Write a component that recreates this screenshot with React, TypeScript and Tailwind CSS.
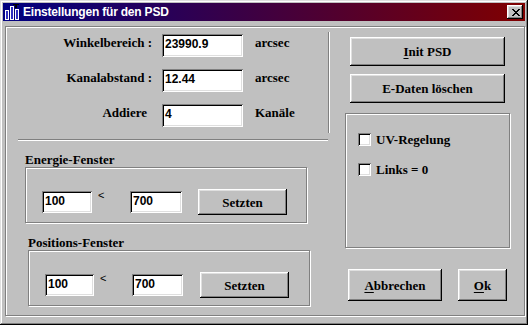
const raised =
  "bg-[#c0c0c0] shadow-[inset_-1px_-1px_#000,inset_1px_1px_#fff,inset_-2px_-2px_#808080,inset_2px_2px_#dfdfdf]";
const sunken =
  "bg-white shadow-[inset_1px_1px_#808080,inset_-1px_-1px_#fff,inset_2px_2px_#000,inset_-2px_-2px_#dfdfdf]";
const etched = "border border-[#808080] shadow-[1px_1px_0_#fff,inset_1px_1px_0_#fff]";

function Btn({ children, className = "" }: { children: React.ReactNode; className?: string }) {
  return (
    <button
      type="button"
      className={`flex items-center justify-center text-[13px] leading-[15px] font-bold text-black ${raised} ${className}`}
    >
      {children}
    </button>
  );
}

function Field({ value, className = "" }: { value: string; className?: string }) {
  return (
    <div
      className={`flex items-start pt-[3px] pl-[3px] font-['Liberation_Sans',Arial,sans-serif] text-[12px] leading-[14px] font-bold text-black ${sunken} ${className}`}
    >
      {value}
    </div>
  );
}

function Row({ label, value, unit, pr = "" }: { label: string; value: string; unit: string; pr?: string }) {
  return (
    <div className="flex items-start h-[23px]">
      <div className={`w-[146px] text-right pt-[1px] leading-[15px] ${pr}`}>{label}</div>
      <Field value={value} className="ml-[10px] w-[81px] h-[23px]" />
      <div className="ml-[12px] pt-[1px] leading-[15px]">{unit}</div>
    </div>
  );
}

function Window({ a, b, w1, w2, gap }: { a: string; b: string; w1: string; w2: string; gap: string }) {
  return (
    <div className="flex items-center mt-[21px] ml-[16px] h-[26px]">
      <Field value={a} className={`${w1} h-[22px]`} />
      <span className="self-start w-[38px] pl-[6px] font-['Liberation_Sans',Arial,sans-serif] font-normal text-[11px] leading-[13px]">
        &lt;
      </span>
      <Field value={b} className={`${w2} h-[22px]`} />
      <Btn className={`${gap} w-[89px] h-[26px]`}>Setzten</Btn>
    </div>
  );
}

function Check({ label }: { label: string }) {
  return (
    <div className="flex items-center h-[13px]">
      <div className={`w-[13px] h-[13px] ${sunken}`} />
      <span className="ml-[5px] leading-[15px]">{label}</span>
    </div>
  );
}

function AppIcon() {
  return (
    <svg width="16" height="16" viewBox="0 0 16 16" shapeRendering="crispEdges">
      <rect x="1" y="6" width="4" height="10" fill="#fff" />
      <rect x="2" y="7" width="2" height="8" fill="#3030c0" />
      <rect x="6" y="2" width="4" height="14" fill="#fff" />
      <rect x="7" y="3" width="2" height="12" fill="#3030c0" />
      <rect x="11" y="5" width="4" height="11" fill="#fff" />
      <rect x="12" y="6" width="2" height="9" fill="#3030c0" />
      <rect x="9" y="0" width="6" height="1" fill="#000" />
      <rect x="11" y="0" width="2" height="4" fill="#000" />
    </svg>
  );
}

function CloseX() {
  const px = [
    [0, 0], [1, 0], [6, 0], [7, 0],
    [1, 1], [2, 1], [5, 1], [6, 1],
    [2, 2], [3, 2], [4, 2], [5, 2],
    [3, 3], [4, 3],
    [2, 4], [3, 4], [4, 4], [5, 4],
    [1, 5], [2, 5], [5, 5], [6, 5],
    [0, 6], [1, 6], [6, 6], [7, 6],
  ];
  return (
    <svg width="8" height="7" viewBox="0 0 8 7" shapeRendering="crispEdges">
      {px.map(([x, y]) => (
        <rect key={`${x}-${y}`} x={x} y={y} width="1" height="1" fill="#000" />
      ))}
    </svg>
  );
}

export default function App() {
  return (
    <div className="w-[528px] h-[325px] bg-[#c0c0c0] p-[3px] flex flex-col shadow-[inset_-1px_-1px_#000,inset_1px_1px_#dfdfdf,inset_-2px_-2px_#808080,inset_2px_2px_#fff] font-['Liberation_Serif',serif] text-[13px] font-bold text-black">
      {/* title bar */}
      <div className="flex items-center h-[18px] bg-[linear-gradient(to_right,#000080,#800000)]">
        <div className="ml-[1px]">
          <AppIcon />
        </div>
        <span className="ml-[3px] font-['Liberation_Sans',Arial,sans-serif] text-[12px] tracking-[-0.2px] leading-[18px] font-bold text-white">
          Einstellungen für den PSD
        </span>
        <div className={`ml-auto mr-[2px] w-[16px] h-[14px] flex items-center justify-center pl-[1px] ${raised}`}>
          <CloseX />
        </div>
      </div>

      {/* client frame */}
      <div className={`mt-[5px] ml-[2px] w-[520px] h-[290px] flex ${etched}`}>
        {/* left column */}
        <div className="w-[339px] flex flex-col">
          <div className="flex">
            <div className="w-[322px] pt-[7px] flex flex-col gap-[12px]">
              <Row label="Winkelbereich :" value="23990.9" unit="arcsec" />
              <Row label="Kanalabstand :" value="12.44" unit="arcsec" />
              <Row label="Addiere" value="4" unit="Kanäle" pr="pr-[5px]" />
            </div>
            <div className="mt-[5px] h-[101px] w-[2px] bg-white border-l border-[#808080]" />
          </div>
          <div className="mt-[6px] ml-[12px] w-[310px] h-[2px] bg-white border-t border-[#808080]" />

          <div className="mt-[12px] ml-[19px] leading-[14px]">Energie-Fenster</div>
          <div className={`ml-[19px] w-[282px] h-[56px] ${etched}`}>
            <Window a="100" b="700" w1="w-[50px]" w2="w-[52px]" gap="ml-[16px]" />
          </div>

          <div className="mt-[13px] ml-[22px] leading-[14px]">Positions-Fenster</div>
          <div className={`ml-[22px] w-[282px] h-[56px] ${etched}`}>
            <Window a="100" b="700" w1="w-[49px]" w2="w-[51px]" gap="ml-[17px]" />
          </div>
        </div>

        {/* right column */}
        <div className="flex flex-col">
          <Btn className="ml-[5px] mt-[10px] w-[155px] h-[29px]">
            <span>
              <span className="underline underline-offset-2">I</span>nit PSD
            </span>
          </Btn>
          <Btn className="ml-[5px] mt-[8px] w-[155px] h-[29px]">E-Daten löschen</Btn>

          <div className={`mt-[10px] w-[165px] h-[135px] pt-[19px] pl-[12px] flex flex-col gap-[17px] ${etched}`}>
            <Check label="UV-Regelung" />
            <Check label="Links = 0" />
          </div>

          <div className="flex mt-[21px] ml-[3px]">
            <Btn className="w-[94px] h-[32px]">
              <span>
                <span className="underline underline-offset-2">A</span>bbrechen
              </span>
            </Btn>
            <Btn className="ml-[16px] w-[49px] h-[32px]">
              <span>
                <span className="underline underline-offset-2">O</span>k
              </span>
            </Btn>
          </div>
        </div>
      </div>
    </div>
  );
}
